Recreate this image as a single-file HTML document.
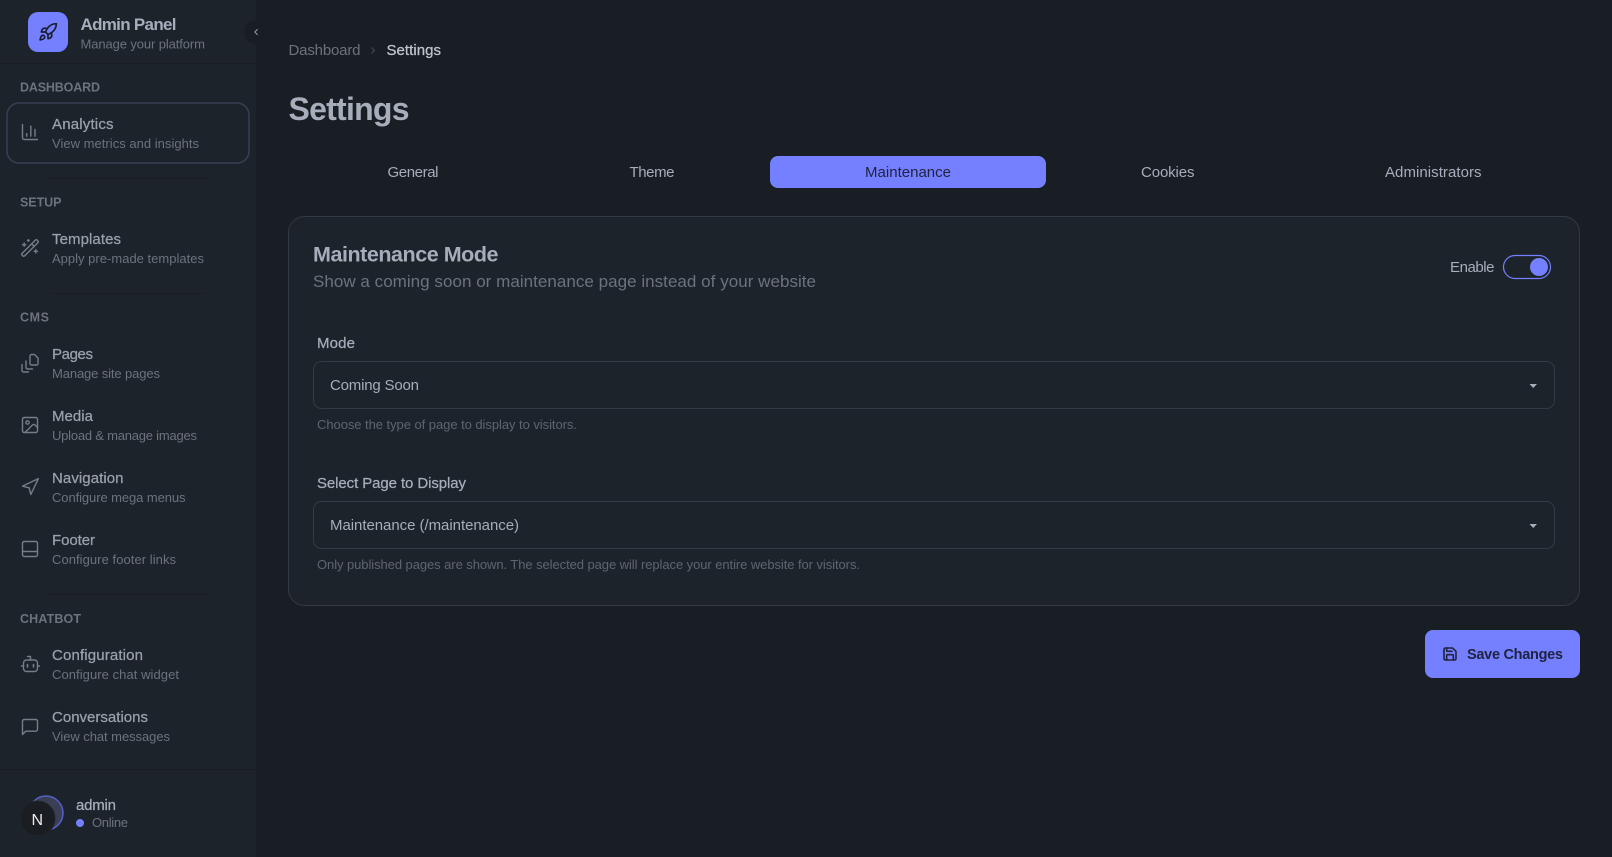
<!DOCTYPE html>
<html lang="en">
<head>
<meta charset="utf-8">
<title>Settings - Admin Panel</title>
<style>
html,body{margin:0;padding:0;background:#191e24;width:1612px;height:857px;overflow:hidden}
svg{display:block}
text{font-family:"Liberation Sans",Arial,sans-serif;white-space:pre}
.ic{fill:none;stroke-width:1.7;stroke-linecap:round;stroke-linejoin:round;stroke:#767c88}
.ip{fill:none;stroke-width:1.4;stroke-linecap:round;stroke-linejoin:round;stroke:#767c88}
.t{font-size:15px;fill:#9aa0ac;stroke:#9aa0ac;stroke-width:.25}
.s{font-size:13px;fill:#6c727e}
.h{font-size:12.5px;font-weight:700;fill:#6c727e}
.tab{font-size:15px;fill:#a6adbb}
.lb{font-size:15px;fill:#a6adbb;stroke:#a6adbb;stroke-width:.25}
.hp{font-size:13px;fill:#5f6570}
.v{font-size:15px;fill:#a6adbb}
</style>
</head>
<body>
<svg xmlns="http://www.w3.org/2000/svg" width="1612" height="857" viewBox="0 0 1612 857">
<rect width="1612" height="857" fill="#191e24"/>

<!-- Sidebar -->
<rect width="256" height="857" fill="#1d232a"/>
<rect x="0" y="63" width="256" height="1" fill="#191e24"/>
<rect x="47" y="178" width="163" height="1" fill="#191e24"/>
<rect x="52" y="293" width="153" height="1" fill="#191e24"/>
<rect x="47" y="594" width="163" height="1" fill="#191e24"/>
<rect x="0" y="769" width="256" height="1" fill="#191e24"/>

<!-- Logo -->
<rect x="28" y="12" width="40" height="40" rx="10" fill="#7480ff"/>
<g class="ic" style="stroke:#1a1d2e;stroke-width:2" transform="translate(38 22) scale(.8333)">
<path d="M4.5 16.5c-1.5 1.26-2 5-2 5s3.74-.5 5-2c.71-.84.7-2.13-.09-2.91a2.18 2.18 0 0 0-2.91-.09z"/>
<path d="m12 15-3-3a22 22 0 0 1 2-3.95A12.88 12.88 0 0 1 22 2c0 2.72-.78 7.5-6 11a22.35 22.35 0 0 1-4 2z"/>
<path d="M9 12H4s.55-3.03 2-4c1.62-1.08 5 0 5 0"/>
<path d="M12 15v5s3.03-.55 4-2c1.08-1.62 0-5 0-5"/>
</g>
<text x="80.5" y="30" textLength="96" font-size="17" font-weight="700" fill="#a6adbb">Admin Panel</text>
<text x="80.5" y="48.5" textLength="124.5" class="s">Manage your platform</text>

<!-- Collapse button -->
<circle cx="256" cy="32" r="12" fill="#191e24"/>
<path d="M257.3 29.5l-2.5 2.5 2.5 2.5" fill="none" stroke="#8d93a0" stroke-width="1.1" stroke-linecap="round" stroke-linejoin="round"/>

<!-- Dashboard -->
<text x="20" y="91.5" textLength="80" class="h">DASHBOARD</text>
<rect x="7" y="103" width="242" height="60" rx="12" fill="none" stroke="#393e55" stroke-width="1.5"/>
<g class="ic" transform="translate(20 122) scale(.8333)">
<path d="M3 3v16a2 2 0 0 0 2 2h16"/><path d="M18 17V9"/><path d="M13 17V5"/><path d="M8 17v-3"/>
</g>
<text x="52" y="129" textLength="61.5" class="t">Analytics</text>
<text x="52" y="148" textLength="147" class="s">View metrics and insights</text>

<!-- Setup -->
<text x="20" y="206.5" textLength="41.5" class="h">SETUP</text>
<g class="ic" transform="translate(20 238) scale(.8333)">
<path d="m21.64 3.64-1.28-1.28a1.21 1.21 0 0 0-1.72 0L2.36 18.64a1.21 1.21 0 0 0 0 1.72l1.28 1.28a1.2 1.2 0 0 0 1.72 0L21.64 5.36a1.2 1.2 0 0 0 0-1.72"/>
<path d="m14 7 3 3"/><path d="M5 6v4"/><path d="M19 14v4"/><path d="M10 2v2"/><path d="M7 8H3"/><path d="M21 16h-4"/><path d="M11 3H9"/>
</g>
<text x="52" y="244" textLength="69" class="t">Templates</text>
<text x="52" y="263" textLength="152" class="s">Apply pre-made templates</text>

<!-- CMS -->
<text x="20" y="321.5" textLength="29" class="h">CMS</text>
<g class="ip">
<path d="M31.5 354.5h3l3.5 3.5v5.5a1.5 1.5 0 0 1-1.5 1.5h-5a1.5 1.5 0 0 1-1.5-1.5v-7.5a1.5 1.5 0 0 1 1.5-1.5z"/>
<path d="M26 361v6.5a1.5 1.5 0 0 0 1.5 1.5h5"/>
<path d="M22 364.500v6a1.500 1.500 0 0 0 1.500 1.500h5"/>
</g>
<text x="52" y="359" textLength="41" class="t">Pages</text>
<text x="52" y="378" textLength="108" class="s">Manage site pages</text>

<g class="ic" transform="translate(20 415) scale(.8333)">
<rect x="3" y="3" width="18" height="18" rx="2"/><circle cx="9" cy="9" r="2"/><path d="m21 15-3.086-3.086a2 2 0 0 0-2.828 0L6 21"/>
</g>
<text x="52" y="421" textLength="41" class="t">Media</text>
<text x="52" y="440" textLength="145" class="s">Upload &amp; manage images</text>

<g class="ic" transform="translate(20 477) scale(.8333)">
<polygon points="3 11 22 2 13 21 11 13 3 11"/>
</g>
<text x="52" y="483" textLength="71.500" class="t">Navigation</text>
<text x="52" y="502" textLength="133.500" class="s">Configure mega menus</text>

<g class="ic" transform="translate(20 539) scale(.8333)">
<rect x="3" y="3" width="18" height="18" rx="2"/><path d="M3 15h18"/>
</g>
<text x="52" y="545" textLength="43" class="t">Footer</text>
<text x="52" y="564" textLength="124" class="s">Configure footer links</text>

<!-- Chatbot -->
<text x="20" y="623" textLength="61" class="h">CHATBOT</text>
<g class="ip">
<path d="M30.500 660v-3.500h-3"/>
<rect x="23.500" y="660" width="14" height="11.500" rx="3"/>
<path d="M21.500 666h2"/><path d="M37.500 666h2"/>
<path d="M27.500 664.500v2.500" stroke-width="1.600"/><path d="M33.500 664.500v2.500" stroke-width="1.600"/>
</g>
<text x="52" y="660" textLength="91" class="t">Configuration</text>
<text x="52" y="679" textLength="127" class="s">Configure chat widget</text>

<g class="ic" transform="translate(20 717) scale(.8333)">
<path d="M21 15a2 2 0 0 1-2 2H7l-4 4V5a2 2 0 0 1 2-2h14a2 2 0 0 1 2 2z"/>
</g>
<text x="52" y="722" textLength="96" class="t">Conversations</text>
<text x="52" y="741" textLength="118" class="s">View chat messages</text>

<!-- User -->
<circle cx="46" cy="813" r="17" fill="#3a3f55" stroke="#5560c8" stroke-width="1.500"/>
<circle cx="37.500" cy="818.500" r="17.500" fill="#1a1d22" stroke="#22262c" stroke-width="1"/>
<text x="31.500" y="825" textLength="11.500" font-size="16" fill="#ececec">N</text>
<text x="76" y="810" textLength="40" class="lb">admin</text>
<circle cx="80" cy="823" r="4" fill="#7480ff"/>
<text x="92" y="827" textLength="36" class="s">Online</text>

<!-- Breadcrumb -->
<text x="288.500" y="55" textLength="72" font-size="15" fill="#6c727e">Dashboard</text>
<path d="M371.500 47.500l3 3-3 3" fill="none" stroke="#454b56" stroke-width="1"/>
<text x="386.500" y="55" textLength="54.500" class="lb" style="fill:#c0c5ce;stroke:#c0c5ce">Settings</text>

<!-- Title -->
<text x="288.500" y="120" textLength="121" font-size="32" font-weight="700" fill="#a6adbb">Settings</text>

<!-- Tabs -->
<rect x="770" y="156" width="276" height="32" rx="8" fill="#7480ff"/>
<text x="387.500" y="177" textLength="51" class="tab">General</text>
<text x="629.500" y="177" textLength="45" class="tab">Theme</text>
<text x="865" y="177" textLength="86" class="tab" style="fill:#1f2240">Maintenance</text>
<text x="1141" y="177" textLength="53.500" class="tab">Cookies</text>
<text x="1385" y="177" textLength="96.500" class="tab">Administrators</text>

<!-- Card -->
<rect x="288.500" y="216.500" width="1291" height="389" rx="16" fill="#1d232a" stroke="#343a43"/>
<text x="313" y="261.500" textLength="185.500" font-size="21.500" font-weight="700" fill="#a6adbb">Maintenance Mode</text>
<text x="313" y="287" textLength="503" font-size="17" fill="#6c727e">Show a coming soon or maintenance page instead of your website</text>

<text x="1450" y="272" textLength="44.500" class="tab">Enable</text>
<rect x="1503.500" y="255.500" width="47" height="23" rx="11.500" fill="none" stroke="#7480ff" stroke-width="1.200"/>
<circle cx="1539" cy="267" r="9" fill="#7480ff"/>

<text x="317" y="348" textLength="38" class="lb">Mode</text>
<rect x="313.500" y="361.500" width="1241" height="47" rx="8" fill="#1d232a" stroke="#343a43"/>
<text x="330" y="390" textLength="89" class="v">Coming Soon</text>
<path d="M1529.500 384h7.500l-3.750 4z" fill="#a6adbb"/>
<text x="317" y="429" textLength="260" class="hp">Choose the type of page to display to visitors.</text>

<text x="317" y="488" textLength="149" class="lb">Select Page to Display</text>
<rect x="313.500" y="501.500" width="1241" height="47" rx="8" fill="#1d232a" stroke="#343a43"/>
<text x="330" y="530" textLength="189" class="v">Maintenance (/maintenance)</text>
<path d="M1529.500 524h7.500l-3.750 4z" fill="#a6adbb"/>
<text x="317" y="569" textLength="543" class="hp">Only published pages are shown. The selected page will replace your entire website for visitors.</text>

<!-- Save button -->
<rect x="1425" y="630" width="155" height="48" rx="8" fill="#7480ff"/>
<g class="ic" style="stroke:#1f2240;stroke-width:2.400" transform="translate(1442 646) scale(.6667)">
<path d="M15.200 3a2 2 0 0 1 1.400.6l3.800 3.800a2 2 0 0 1 .6 1.400V19a2 2 0 0 1-2 2H5a2 2 0 0 1-2-2V5a2 2 0 0 1 2-2z"/>
<path d="M17 21v-7a1 1 0 0 0-1-1H8a1 1 0 0 0-1 1v7"/>
<path d="M7 3v4a1 1 0 0 0 1 1h7"/>
</g>
<text x="1467" y="659" textLength="96" font-size="14.500" font-weight="700" fill="#1f2240">Save Changes</text>
</svg>
</body>
</html>
